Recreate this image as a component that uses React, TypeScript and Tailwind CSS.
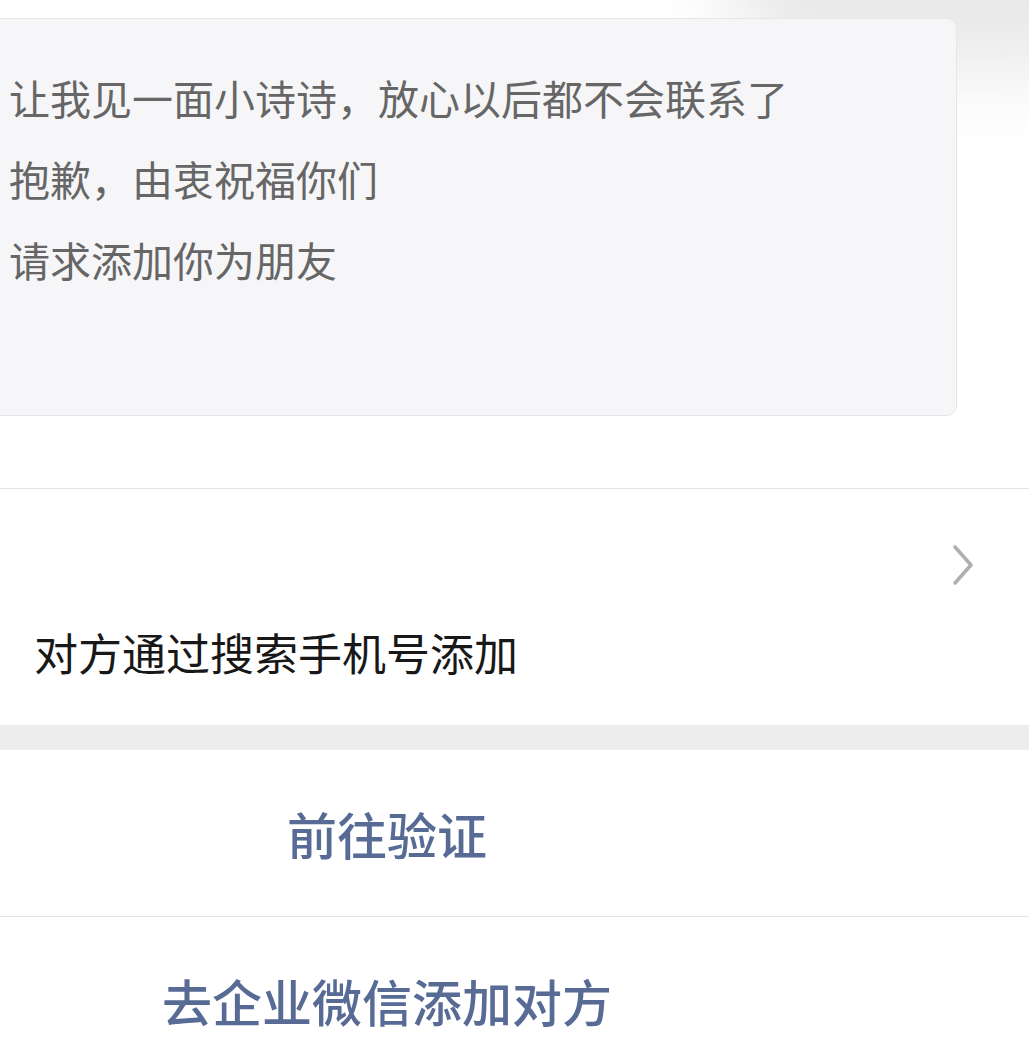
import React from "react";

const cjk = { fontFamily: '"Noto Sans CJK SC", "Noto Sans", sans-serif' };

export default function App() {
  return (
    <div className="relative w-[1029px] h-[1056px] overflow-hidden bg-white" style={cjk}>
      {/* top-right soft shadow */}
      <div className="pointer-events-none absolute right-[-120px] top-[-90px] h-[160px] w-[420px] rounded-full bg-[#d9d9d9] opacity-60 blur-[40px]" />

      {/* message box */}
      <div className="relative pt-[18px]">
        <div className="ml-[-20px] w-[977px] h-[398px] rounded-[10px] border border-[#e6e6e8] bg-[#f6f6f8] pt-[38px] pl-[28px]">
          <div className="text-[41px] leading-[81px] text-[#666666]">
            <p>让我见一面小诗诗，放心以后都不会联系了</p>
            <p>抱歉，由衷祝福你们</p>
            <p>请求添加你为朋友</p>
          </div>
        </div>
      </div>

      {/* divider */}
      <div className="mt-[72px] h-px bg-[#e3e3e3]" />

      {/* source row */}
      <div className="h-[236px] bg-white">
        <div className="flex justify-end pr-[54px] pt-[55px]">
          <svg width="24" height="42" viewBox="0 0 24 42" fill="none">
            <path d="M4 3 L20 21 L4 39" stroke="#b0b0b0" strokeWidth="3.6" strokeLinecap="round" strokeLinejoin="round" />
          </svg>
        </div>
        <div className="pl-[34px] mt-[36px] text-[44px] leading-[60px] text-[#181818]">
          对方通过搜索手机号添加
        </div>
      </div>

      {/* gray band */}
      <div className="h-[25px] bg-[#ededed]" />

      {/* buttons */}
      <div className="w-[774px] h-[166px] flex items-center justify-center text-[50px] font-medium text-[#576b95]">
        前往验证
      </div>
      <div className="h-px bg-[#e3e3e3]" />
      <div className="w-[774px] h-[166px] flex items-center justify-center text-[50px] font-medium text-[#576b95]">
        去企业微信添加对方
      </div>
    </div>
  );
}
